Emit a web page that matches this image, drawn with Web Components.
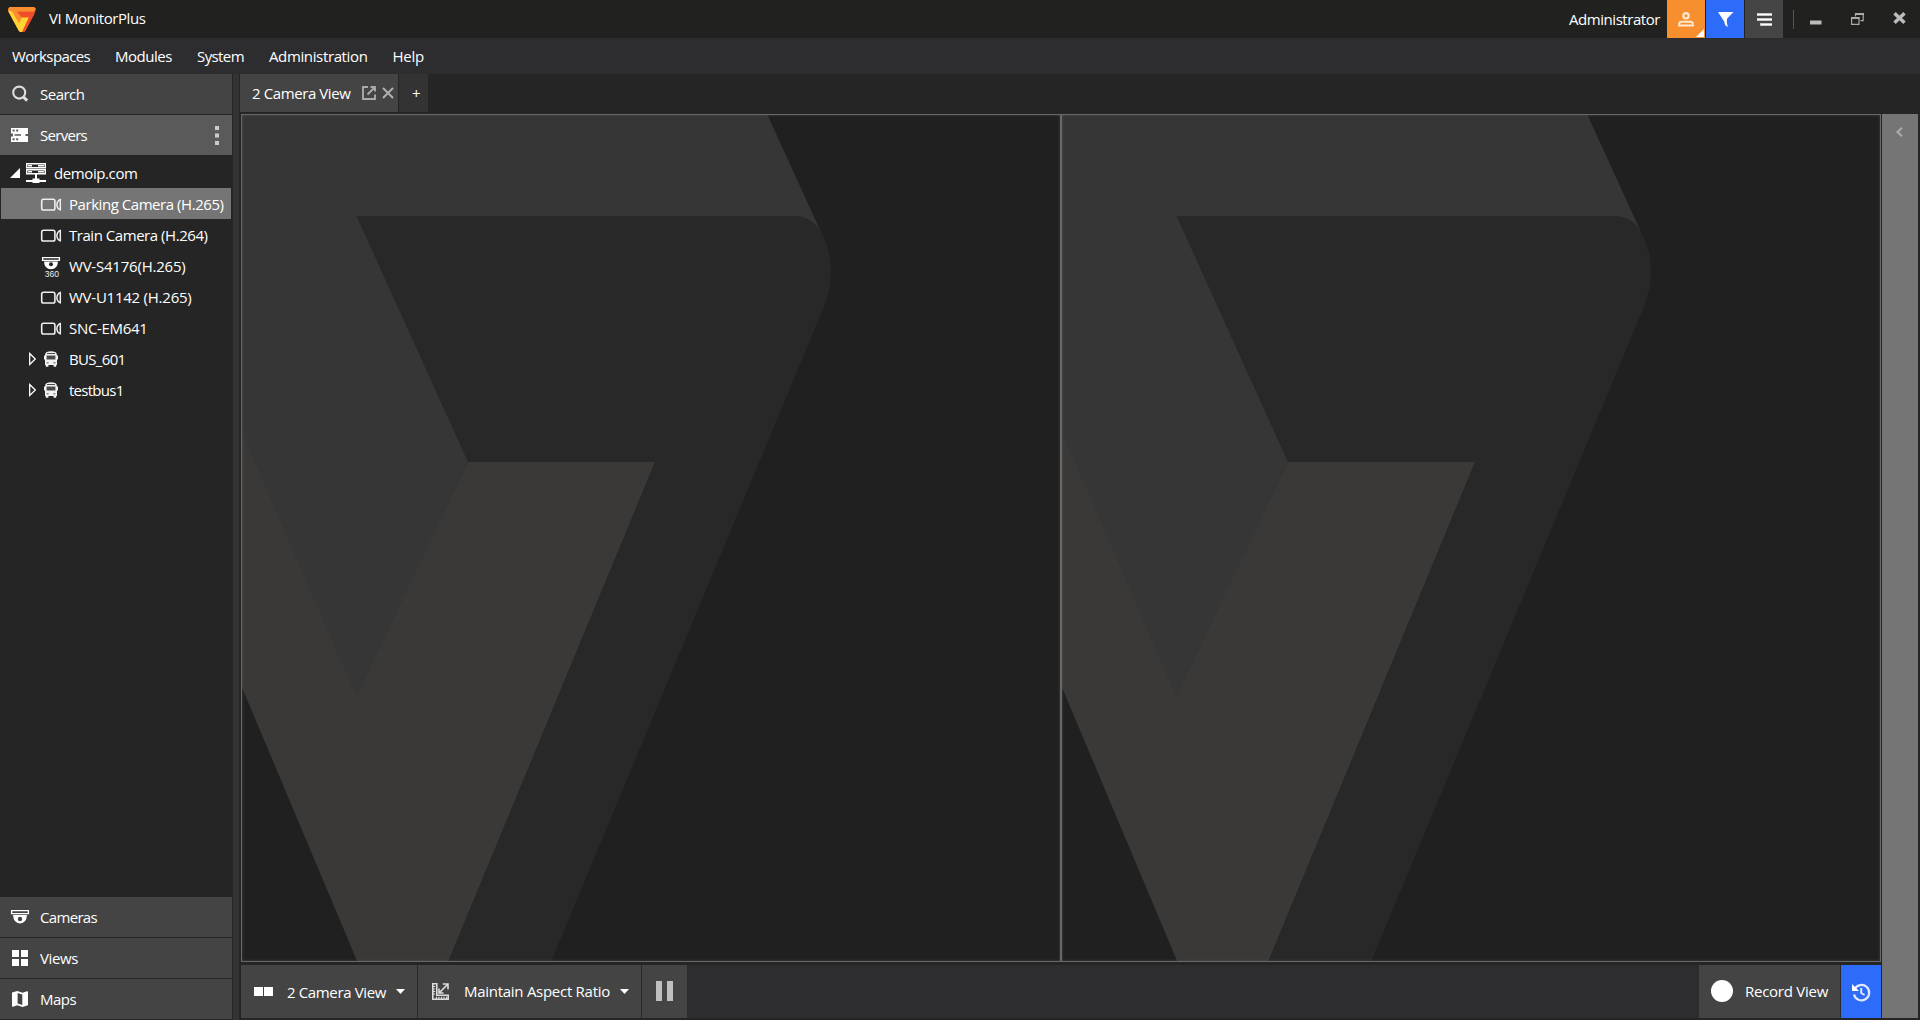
<!DOCTYPE html>
<html lang="en">
<head>
<meta charset="utf-8">
<title>VI MonitorPlus</title>
<style>
html,body{margin:0;height:100%;background:#252525;overflow:hidden}
body{font:15px/20px "Open Sans","Noto Sans",sans-serif;color:#fff}
</style>
</head>
<body>
<monitor-app></monitor-app>
<script>
const ICONS = {
logo:[28,25,'<path d="M1.6 0H25Q28 0 27.8 3L27 5 17.5 23.5Q16.5 25 15.5 25H12.5Q11.3 25 10.6 23.6L.4 4.6Q-.8 1.8 1.6 0Z" fill="#f15a29"/><path d="M1.6 0H25Q27 0 27.6 1.6L26 4.4H9L14 11 11.5 17 .8 4.5Q-.6 1.6 1.6 0Z" fill="#f78f2e"/><path d="M.3 3.4L4 4.6 11 16.3 14 10.3H21L14.5 25H12.5Q11.3 25 10.6 23.6L.6 5Z" fill="#fed435"/><path d="M22 5H25.5Q27.5 5 26 8L17.5 23.5Q16.5 25 15 25H14L21 10.3H14L9.4 5Z" fill="#f04e2b"/>'],
search:[18,18,'<circle cx="8.2" cy="7.6" r="6" fill="none" stroke="#ddd" stroke-width="2.1"/><path d="M12 11.6L16.2 15.6" stroke="#ddd" stroke-width="3"/>'],
servers:[17,14,'<path d="M0 0H17V6H15V8H17V14H0V8H2V6H0Z" fill="#fff"/><path d="M1.6 1.6h2v2h-2zM5.2 1.6h2v2h-2zM1.6 10.2h2v2h-2zM5.2 10.2h2v2h-2zM0 5.6H2V8.4H0zM3.5 6.3H10V7.7H3.5zM14.5 6h2.500v2h-2.500z" fill="#5a5a5a"/>'],
more:[5,19,'<path d="M0 0h4v4h-4zM0 7.5h4v4h-4zM0 15h4v4h-4z" fill="#ccc"/>'],
host:[20,20,'<path d="M.7 .7H19.3V4.7H.7ZM.7 6.7H19.3V10.7H.7Z" fill="none" stroke="#fff" stroke-width="1.4"/><path d="M2 2h4v1.6H2zM2 8h4v1.6H2zM12 2h6v1.6h-6zM12 8h6v1.6h-6zM9 11h2v5H9zM0 17h20v2H0zM6.500 15.500h7v4.500h-7z" fill="#fff"/>'],
camera:[20,13,'<rect x=".7" y="1.2" width="13.200" height="10.800" rx="1.8" fill="none" stroke="#eee" stroke-width="1.6"/><path d="M19.300 1.400V11.900Q15.900 10.200 15.900 6.650T19.300 1.400Z" fill="none" stroke="#eee" stroke-width="1.5" stroke-linejoin="round"/>'],
dome360:[18,20,'<path d="M.6 .6H17.4V3.4H.6Z" fill="none" stroke="#fff" stroke-width="1.3"/><path d="M2 4.500H16Q15.500 12.200 9 12.200T2 4.500Z" fill="#fff"/><circle cx="9" cy="7.300" r="2" fill="#252525"/><text x="9.800" y="19.600" text-anchor="middle" font-family="Liberation Sans" font-size="8.500" fill="#eee">360</text>'],
bus:[14,16,'<path d="M1 4.500Q1 1.800 2.800 1Q7 -.6 11.200 1Q13 1.800 13 4.500H14V8.500H13V14H12.200V15.800H9.600V14H4.400V15.800H1.800V14H1V8.500H0V4.500Z" fill="#f2f2f2"/><path d="M2.600 4.600H11.400V8.600H2.600ZM3 2H11V3H3Z" fill="#4a4a4a"/><path d="M2.600 11h2v1.400h-2zM9.400 11h2v1.400h-2z" fill="#888"/>'],
open:[10,10,'<path d="M10 0V10H0Z" fill="#fff"/>'],
closed:[8,14,'<path d="M.7 1.5L6.3 7 .7 12.5Z" fill="none" stroke="#fff" stroke-width="1.3"/>'],
dome:[18,14,'<path d="M.6 .6H17.4V3.6H.6Z" fill="none" stroke="#fff" stroke-width="1.3"/><path d="M2 5H16Q15.4 13.4 9 13.4T2 5Z" fill="#fff"/><circle cx="9" cy="9" r="2.2" fill="#444"/>'],
grid:[16,16,'<path d="M0 0h7v7H0zM9 0h7v7H9zM0 9h7v7H0zM9 9h7v7H9z" fill="#fff"/>'],
map:[16,16,'<path d="M0 1.6L5.3 0 10.5 1.7 15 .2Q16 0 16 1V14.2L10.6 16 5.3 14.2 1 15.8Q0 16 0 15Z" fill="#fff"/><path d="M5.6 2L10.3 3.6V14L5.6 12.4Z" fill="#444"/>'],
popout:[14,14,'<path d="M6 1H1V13H13V8.500M8.500 1H13V5.500M13 1L5.500 8.500" fill="none" stroke="#aaa" stroke-width="1.9"/>'],
close:[12,12,'<path d="M1 1L11 11M11 1L1 11" stroke="#b0b0b0" stroke-width="2"/>'],
user:[16,15,'<circle cx="8" cy="3.8" r="2.7" fill="none" stroke="#ffe8d2" stroke-width="2.1"/><path d="M1.200 13.600V12Q1.200 9.800 4 9.800H12Q14.800 9.800 14.800 12V13.600Z" fill="none" stroke="#ffe8d2" stroke-width="2"/>'],
corner:[8,8,'<path d="M8 0V8H0Z" fill="#fff"/>'],
flag:[15,15,'<path d="M0 0H15.500L9.200 6.500Q8.200 9 9.800 15Q7 14 6.200 9.500Z" fill="#fff"/>'],
lines:[15,13,'<path d="M0 0h15v3H0zM0 5h15v3H0zM3 10H15v3H3z" fill="#c4c4c4"/><path d="M0 1h15v1H0zM0 6h15v1H0zM4 11H15v1H4z" fill="#fff"/>'],
min:[12,5,'<path d="M0 .5h11.5v4H0z" fill="#bbb"/>'],
restore:[13,12,'<path d="M4.5 3.5V1.2H12.2V7.6H9.5M.6 5H8V11.3H.6Z" fill="none" stroke="#aaa" stroke-width="1.2"/><path d="M4 0h9v2H4zM0 4h8.6v2H0z" fill="#aaa"/>'],
closewin:[13,12,'<path d="M1.5 1.3L11.5 10.8M11.5 1.3L1.5 10.8" stroke="#bbb" stroke-width="3.5"/>'],
chevron:[7,10,'<path d="M6 .7L1.5 5 6 9.3" fill="none" stroke="#aaa" stroke-width="2.2"/>'],
two:[19,9,'<path d="M0 0h9v9H0zM10 0h9v9h-9z" fill="#fff"/>'],
caret:[9,5,'<path d="M0 0H9L4.5 5Z" fill="#fff"/>'],
aspect:[17,17,'<path d="M.8 .8H4.800V12.200H16.200V16.200H.8Z" fill="none" stroke="#ddd" stroke-width="1.600"/><path d="M1 3.5h2.200M1 6h2.200M1 8.500h2.200M1 11h2.200M4.500 16v-2.200M7 16v-2.200M9.500 16v-2.200M12 16v-2.200M14.500 16v-2.200" stroke="#ddd" stroke-width="1.200"/><path d="M7 10L15.500 1.500M10.800 1H16V6.200M7 5.500V10H11.500" stroke="#ddd" stroke-width="1.600" fill="none"/>'],
pause:[18,20,'<path d="M0 0h6v20H0zM11 0h6v20h-6z" fill="#c0c0c0"/>'],
record:[22,22,'<circle cx="11" cy="11" r="11" fill="#fff"/>'],
history:[18,18,'<path d="M2.6 6.2A7.7 7.7 0 1 1 2 11.5" fill="none" stroke="#dfe8ff" stroke-width="2.2"/><path d="M0 1V8H7Z" fill="#fff"/><path d="M9.2 5V10L12.6 12" fill="none" stroke="#dfe8ff" stroke-width="2"/>']
};

class UiIcon extends HTMLElement{
  connectedCallback(){
    const [w,h,body]=ICONS[this.getAttribute('name')];
    this.attachShadow({mode:'open'}).innerHTML=`<style>:host{display:block;flex:none;width:${w}px;height:${h}px}svg{display:block;overflow:visible}</style><svg width="${w}" height="${h}" viewBox="0 0 ${w} ${h}">${body}</svg>`;
  }
}
customElements.define('ui-icon',UiIcon);

/* One-line label whose tracking is adjusted to fill the given width. */
class UiLabel extends HTMLElement{
  connectedCallback(){
    const w=+this.getAttribute('w'), t=this.textContent;
    this.attachShadow({mode:'open'}).innerHTML=`<style>:host{display:block;flex:none;width:${w}px;white-space:pre}span{display:inline-block}</style><span></span>`;
    const s=this.shadowRoot.querySelector('span');
    s.textContent=t;
    const d=(w-s.getBoundingClientRect().width)/t.length;
    s.style.letterSpacing=d.toFixed(3)+'px';
  }
}
customElements.define('ui-label',UiLabel);

const define=(tag,html)=>customElements.define(tag,class extends HTMLElement{
  connectedCallback(){ if(!this.shadowRoot) this.attachShadow({mode:'open'}).innerHTML=html; }
});

define('title-bar',`<style>
:host{display:flex;height:38px;background:#21211f;align-items:center;box-sizing:border-box;padding:0 14px 0 8px}
.name{margin:-2px 0 0 13px}.grow{flex:1}.btns{display:flex;gap:1px;margin:0 10px 0 7px}
.b{width:38px;height:38px;display:flex;align-items:center;justify-content:center;position:relative}
.o{background:#f78f2e}.u{background:#2d6cf8}.g{background:#454545}
.corner{position:absolute;right:1px;bottom:1px}
.sep{width:1px;height:19px;background:#555}
.win{display:flex;align-items:center;gap:29px;margin-left:16px}
</style>
<ui-icon name="logo"></ui-icon><ui-label class="name" w="96.5">VI MonitorPlus</ui-label><div class="grow"></div>
<ui-label w="91">Administrator</ui-label>
<div class="btns"><div class="b o"><ui-icon name="user"></ui-icon><ui-icon class="corner" name="corner"></ui-icon></div><div class="b u"><ui-icon name="flag"></ui-icon></div><div class="b g"><ui-icon name="lines"></ui-icon></div></div>
<div class="sep"></div>
<div class="win"><ui-icon name="min" style="margin-top:7px"></ui-icon><ui-icon name="restore"></ui-icon><ui-icon name="closewin" style="margin-top:-2px"></ui-icon></div>`);

define('menu-bar',`<style>:host{display:flex;height:36px;background:#2d2d2f;align-items:center;gap:25px;padding:0 12px}</style>
<ui-label w="78">Workspaces</ui-label><ui-label w="57">Modules</ui-label><ui-label w="47">System</ui-label><ui-label w="98.5">Administration</ui-label><ui-label w="31.5">Help</ui-label>`);

define('side-row',`<style>
:host{display:flex;height:40px;background:#444;align-items:center;padding:0 12px 0 0}
:host([active]){background:#5a5a5a}
.i{width:40px;box-sizing:border-box;padding-left:11px}.grow{flex:1}
</style><div class="i"><slot name="icon"></slot></div><slot></slot><div class="grow"></div><slot name="end"></slot>`);

define('tree-row',`<style>
:host{display:flex;height:31px;align-items:center;margin:0 1px;box-sizing:border-box;padding-top:2px}
:host([selected]){background:#757575}
.a{width:39px;box-sizing:border-box;padding-left:28px}
.i{width:29px;display:flex;align-items:center}
:host([root]) .a{width:25px;padding-left:9px}
:host([root]) .i{width:28px}
.t{margin-top:-2px}
</style><div class="a"><slot name="arrow"></slot></div><div class="i"><slot name="icon"></slot></div><div class="t"><slot></slot></div>`);

const cam=(t,w,sel='')=>`<tree-row ${sel}><ui-icon slot="icon" name="camera" style="margin-left:1px"></ui-icon><ui-label w="${w}">${t}</ui-label></tree-row>`;
const bus=(t,w)=>`<tree-row><ui-icon slot="arrow" name="closed" style="margin-top:-1px"></ui-icon><ui-icon slot="icon" name="bus" style="margin:-1px 0 0 4px"></ui-icon><ui-label w="${w}">${t}</ui-label></tree-row>`;
define('side-bar',`<style>
:host{display:flex;flex-direction:column;width:232px;gap:1px;padding-bottom:1px}
.tree{flex:1;padding-top:1px}
</style>
<side-row><ui-icon slot="icon" name="search"></ui-icon><ui-label w="44.5">Search</ui-label></side-row>
<side-row active><ui-icon slot="icon" name="servers"></ui-icon><ui-label w="47">Servers</ui-label><ui-icon slot="end" name="more"></ui-icon></side-row>
<div class="tree">
<tree-row root><ui-icon slot="arrow" name="open" style="margin-top:-1px"></ui-icon><ui-icon slot="icon" name="host" style="margin-top:-1px"></ui-icon><ui-label w="83.5">demoip.com</ui-label></tree-row>
${cam('Parking Camera (H.265)',154.5,'selected')}${cam('Train Camera (H.264)',138.5)}
<tree-row><ui-icon slot="icon" name="dome360" style="margin-left:2px"></ui-icon><ui-label w="116.5">WV-S4176(H.265)</ui-label></tree-row>
${cam('WV-U1142 (H.265)',122.5)}${cam('SNC-EM641',78.5)}${bus('BUS_601',56.5)}${bus('testbus1',54.5)}
</div>
<side-row><ui-icon slot="icon" name="dome"></ui-icon><ui-label w="57">Cameras</ui-label></side-row>
<side-row><ui-icon slot="icon" name="grid" style="margin-left:1px"></ui-icon><ui-label w="38">Views</ui-label></side-row>
<side-row><ui-icon slot="icon" name="map" style="margin-left:1px"></ui-icon><ui-label w="36">Maps</ui-label></side-row>`);

define('tab-strip',`<style>
:host{display:flex;height:38px;gap:1px}
.t{width:158px;background:#444;display:flex;align-items:center;box-sizing:border-box;padding-left:12px}
.t ui-icon{margin-left:11px}.t ui-icon+ui-icon{margin-left:6.5px}
.p{width:29px;background:#333;display:flex;align-items:center;justify-content:center;padding-left:6px;box-sizing:border-box}
</style><div class="t"><ui-label w="98.5">2 Camera View</ui-label><ui-icon name="popout"></ui-icon><ui-icon name="close"></ui-icon></div><div class="p"><ui-label w="9">+</ui-label></div>`);

define('camera-pane',`<style>
:host{display:block;flex:1;box-sizing:border-box;border:1px solid #686868;position:relative;background:#202020}
svg{display:block;width:100%;height:100%}
.edge{position:absolute;inset:0;box-shadow:inset 0 0 3px rgba(110,110,110,.45)}
</style><svg viewBox="242 115 818 846" preserveAspectRatio="none">
<path d="M242 115H767.5L820.5 231 700 462H468L357 702 241 434Z" fill="#363636"/>
<path d="M356.500 216H796Q812 217 820.500 231Q840 266 823.500 308L551 962H448L655 462H468Z" fill="#282828"/>
<path d="M241 430L356.500 697 468 462H655L448 962H357.500L241 685Z" fill="#3b3937"/>
</svg><div class="edge"></div>`);

define('bottom-bar',`<style>
:host{display:flex;height:53px;background:#2d2d2f;margin:3px 0 0 1px}
.l,.r{display:flex;gap:1px;background:#2a2a2a}.grow{flex:1}
.b{background:#444;display:flex;align-items:center;box-sizing:border-box}
</style>
<div class="l">
<div class="b" style="width:176px;padding-left:13px"><ui-icon name="two"></ui-icon><ui-label w="99" style="margin-left:14px">2 Camera View</ui-label><ui-icon name="caret" style="margin-left:10px"></ui-icon></div>
<div class="b" style="width:223px;padding-left:14px"><ui-icon name="aspect" style="margin-top:-1px"></ui-icon><ui-label w="146" style="margin:-2px 0 0 15px">Maintain Aspect Ratio</ui-label><ui-icon name="caret" style="margin-left:10px"></ui-icon></div>
<div class="b" style="width:45px;padding-left:14px"><ui-icon name="pause" style="margin-top:-1px"></ui-icon></div></div>
<div class="grow"></div>
<div class="r"><div class="b" style="width:141px;padding-left:12px"><ui-icon name="record" style="margin-top:-1px"></ui-icon><ui-label w="83" style="margin:-2px 0 0 12px">Record View</ui-label></div>
<div class="b" style="width:40px;background:#2d6cf8;padding-left:11px"><ui-icon name="history"></ui-icon></div></div>`);

define('monitor-app',`<style>
:host{display:flex;flex-direction:column;width:1920px;height:1020px;background:#252525}
.main{flex:1;display:flex;min-height:0}
.split{width:6px;margin:0 1px;background:#333}
.content{width:1641px;display:flex;flex-direction:column;padding-bottom:2px}
.panes{flex:1;display:flex;margin:2px 0 0 1px}
.drawer{width:36px;margin:40px 0 2px 1px;background:#757575;display:flex;justify-content:center;padding:13px 1px 0 0;box-sizing:border-box}
</style>
<title-bar></title-bar><menu-bar></menu-bar>
<div class="main"><side-bar></side-bar><div class="split"></div>
<div class="content"><tab-strip></tab-strip><div class="panes"><camera-pane></camera-pane><camera-pane></camera-pane></div><bottom-bar></bottom-bar></div>
<div class="drawer"><ui-icon name="chevron"></ui-icon></div></div>`);
</script>
</body>
</html>
